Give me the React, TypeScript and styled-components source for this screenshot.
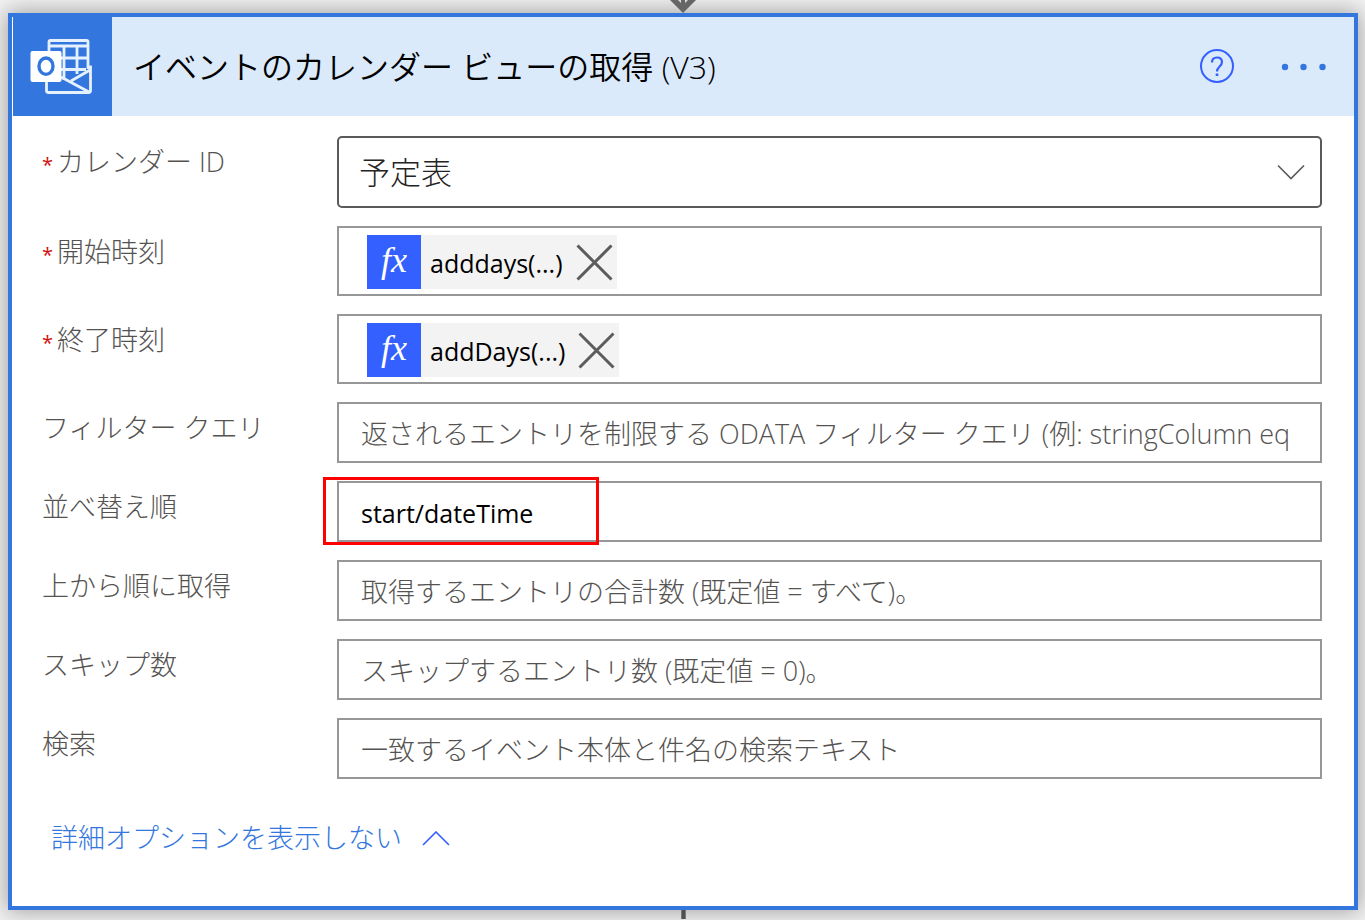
import React from "react";
import styled, { createGlobalStyle } from "styled-components";

const GlobalStyle = createGlobalStyle`
  *, *::before, *::after { box-sizing: border-box; }
  body {
    margin: 0;
    background: #f4f4f4;
    font-family: "Open Sans", "Noto Sans CJK JP", sans-serif;
    font-weight: 300;
    color: #555351;
  }
`;

const Canvas = styled.main`
  display: flex;
  flex-direction: column;
  min-height: 100vh;
  overflow: hidden;
  padding: 0 7px 0 8px;
`;

const Connector = styled.svg`
  display: block;
  flex: none;
  align-self: center;
  position: relative;
`;

const Card = styled.section`
  border: 4px solid #3276de;
  background: #fff;
  box-shadow: 0 0 22px 2px rgba(0, 0, 0, 0.34);
`;

const Header = styled.header`
  display: flex;
  align-items: center;
  height: 99px;
  margin-left: 1px;
  padding-right: 25px;
  background: #dbeafb;
`;

const Brand = styled.div`
  width: 99px;
  height: 99px;
  background: #3276de;
`;

const Title = styled.h1`
  flex: 1;
  margin: 0 0 0 21px;
  font-size: 32px;
  line-height: 44px;
  font-weight: 350;
  color: #000;
`;

const IconButton = styled.button`
  display: flex;
  padding: 0;
  border: 0;
  background: none;
  cursor: pointer;
`;

const HeaderActions = styled.div`
  display: flex;
  align-items: center;
  gap: 42px;
`;

const Form = styled.form`
  display: flex;
  flex-direction: column;
  gap: 18px;
  padding: 20px 32px 48px 30px;
`;

const Row = styled.div`
  display: grid;
  grid-template-columns: 295px minmax(0, 1fr);
`;

const Label = styled.label`
  padding-top: 8px;
  font-size: 27px;
  line-height: 36px;
`;

const Required = styled.span`
  margin-right: 4px;
  font-size: 20px;
  font-weight: 400;
  color: #d00f0f;
`;

const Field = styled.div`
  position: relative;
`;

const TextInput = styled.input`
  display: block;
  width: 100%;
  height: 61px;
  padding: 2px 22px 0;
  border: 2px solid #979797;
  background: #fff;
  font: inherit;
  font-size: 25px;
  font-weight: 400;
  color: #000;
  outline: none;
  &:placeholder-shown { font-size: 27px; font-weight: 300; }
  &::placeholder { color: #555351; opacity: 1; }
`;

const Select = styled.select`
  display: block;
  appearance: none;
  width: 100%;
  height: 72px;
  padding: 0 20px;
  border: 2px solid #5a5a5a;
  border-radius: 5px;
  background: #fff;
  font: inherit;
  font-size: 31px;
  color: #252423;
`;

const Chevron = styled.svg`
  position: absolute;
  top: 28px;
  right: 17px;
  pointer-events: none;
`;

const TokenBox = styled.div`
  display: flex;
  height: 70px;
  padding: 7px 28px;
  border: 2px solid #979797;
`;

const Token = styled.div`
  display: flex;
  align-items: center;
  height: 54px;
  padding-right: 4px;
  background: #f3f3f3;
  font-size: 25px;
  font-weight: 400;
  color: #000;
`;

const FxBadge = styled.span`
  width: 54px;
  height: 54px;
  margin-right: 9px;
  background: #3460ff;
  color: #fff;
  font-family: "Liberation Serif", serif;
  font-style: italic;
  font-weight: 400;
  font-size: 36px;
  line-height: 50px;
  text-align: center;
`;

const TokenText = styled.span`
  padding-top: 2px;
  margin-right: 13px;
`;

const Highlight = styled.div`
  position: absolute;
  top: -4px;
  left: -14px;
  width: 276px;
  height: 68px;
  border: 3px solid #f00;
  pointer-events: none;
`;

const ToggleButton = styled.button`
  display: flex;
  align-items: center;
  align-self: flex-start;
  gap: 20px;
  margin: 21px 0 0 9px;
  padding: 0;
  border: 0;
  background: none;
  font: inherit;
  font-size: 27px;
  line-height: 40px;
  color: #3276de;
  cursor: pointer;
`;

function OutlookIcon() {
  return (
    <svg width="99" height="99" viewBox="0 0 99 99" fill="none" aria-hidden="true">
      <g stroke="#e6f1ff" strokeWidth="2.800" strokeLinejoin="round">
        <path d="M36 34V25q0-1.500 1.500-1.500h36q1.500 0 1.500 1.500V52" />
        <path d="M36 29h39M48 41h27M48 52.500h25M51 29v34M64 29v28" />
        <path d="M33.500 64v9.500q0 2 2 2h40q2 0 2-2V48.500" />
        <path d="M77 53L58 64M48 60l28 15" />
      </g>
      <rect x="17.500" y="34" width="31" height="31" rx="2" fill="#fff" />
      <ellipse cx="33" cy="49.200" rx="7" ry="8.200" stroke="#3276de" strokeWidth="3.400" />
    </svg>
  );
}

function Mark() {
  return <Required aria-hidden="true">*</Required>;
}

function TokenField({ id, label, text }: { id: string; label: string; text: string }) {
  return (
    <Row role="group" aria-labelledby={id}>
      <Label as="span" id={id}><Mark />{label}</Label>
      <TokenBox>
        <Token>
          <FxBadge>fx</FxBadge>
          <TokenText>{text}</TokenText>
          <IconButton type="button" aria-label={`${text} を削除`}>
            <svg width="37" height="37" viewBox="0 0 37 37" stroke="#5c5c5c" strokeWidth="3">
              <path d="M1.500 1.500l34 34M35.500 1.500l-34 34" />
            </svg>
          </IconButton>
        </Token>
      </TokenBox>
    </Row>
  );
}

interface TextFieldProps {
  id: string;
  label: string;
  placeholder?: string;
  value?: string;
  highlighted?: boolean;
}

function TextField({ id, label, placeholder, value, highlighted }: TextFieldProps) {
  return (
    <Row>
      <Label htmlFor={id}>{label}</Label>
      <Field>
        <TextInput id={id} type="text" placeholder={placeholder} defaultValue={value} />
        {highlighted && <Highlight />}
      </Field>
    </Row>
  );
}

export default function App() {
  return (
    <>
      <GlobalStyle />
      <Canvas>
        <Connector width="26" height="13" viewBox="0 0 26 13" aria-hidden="true">
          <path d="M0 0h26L13 13z" fill="#666" />
          <path d="M8 0h3v3zM15 0h3l-3 3z" fill="#ddd" />
        </Connector>
        <Card>
          <Header>
            <Brand><OutlookIcon /></Brand>
            <Title>イベントのカレンダー ビューの取得 (V3)</Title>
            <HeaderActions>
              <IconButton type="button" aria-label="ヘルプ">
                <svg width="36" height="36" viewBox="0 0 36 36" fill="none" stroke="#3460ff">
                  <circle cx="18" cy="17" r="16" strokeWidth="2" />
                  <path d="M13 13.500c0-3 2-5 5-5s5 1.800 5 4.600c0 4.400-5 4.400-5 9.400" strokeWidth="2.200" />
                  <path d="M18 24.500v2.500" strokeWidth="2.600" />
                </svg>
              </IconButton>
              <IconButton type="button" aria-label="メニュー">
                <svg width="52" height="8" viewBox="0 0 52 8" fill="#3276de">
                  <circle cx="8" cy="4" r="3.200" />
                  <circle cx="26.500" cy="4" r="3.200" />
                  <circle cx="45.500" cy="4" r="3.200" />
                </svg>
              </IconButton>
            </HeaderActions>
          </Header>
          <Form>
            <Row>
              <Label htmlFor="calendar"><Mark />カレンダー ID</Label>
              <Field>
                <Select id="calendar" defaultValue="予定表">
                  <option>予定表</option>
                </Select>
                <Chevron width="28" height="16" viewBox="0 0 28 16" fill="none" stroke="#5a5a5a" strokeWidth="1.600">
                  <path d="M1 1.500l13 13 13-13" />
                </Chevron>
              </Field>
            </Row>
            <TokenField id="start" label="開始時刻" text="adddays(...)" />
            <TokenField id="end" label="終了時刻" text="addDays(...)" />
            <TextField id="filter" label="フィルター クエリ" placeholder="返されるエントリを制限する ODATA フィルター クエリ (例: stringColumn eq" />
            <TextField id="order" label="並べ替え順" value="start/dateTime" highlighted />
            <TextField id="top" label="上から順に取得" placeholder="取得するエントリの合計数 (既定値 = すべて)。" />
            <TextField id="skip" label="スキップ数" placeholder="スキップするエントリ数 (既定値 = 0)。" />
            <TextField id="search" label="検索" placeholder="一致するイベント本体と件名の検索テキスト" />
            <ToggleButton type="button">
              詳細オプションを表示しない
              <svg width="28" height="15" viewBox="0 0 28 15" fill="none" stroke="#3460ff" strokeWidth="1.600">
                <path d="M1 14L14 1l13 13" />
              </svg>
            </ToggleButton>
          </Form>
        </Card>
        <Connector width="5" height="9" viewBox="0 0 5 9" aria-hidden="true">
          <path d="M0 0h5v9H0z" fill="#777" />
          <path d="M1 0h3v9H1z" fill="#505050" />
        </Connector>
      </Canvas>
    </>
  );
}
